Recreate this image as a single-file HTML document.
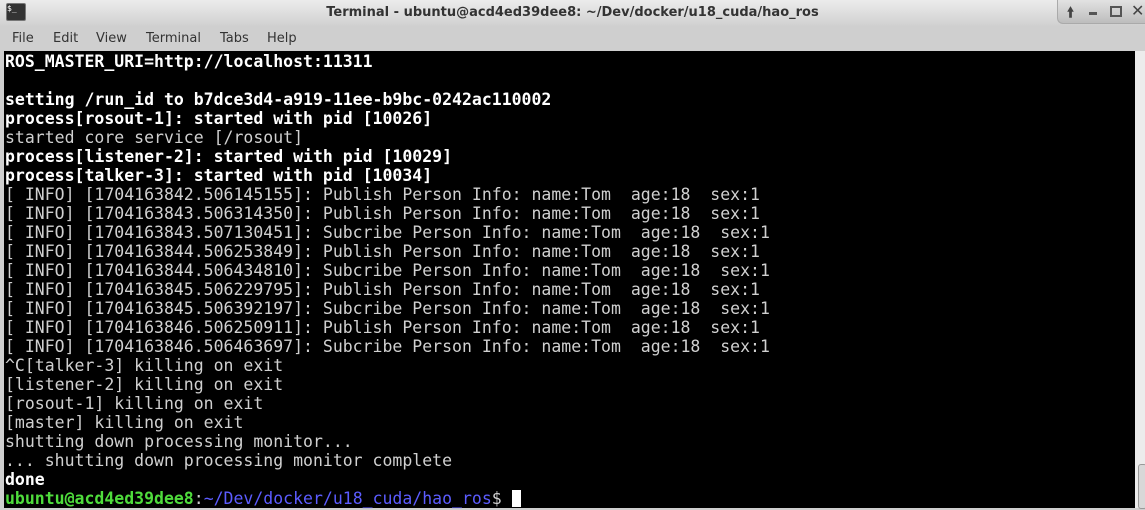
<!DOCTYPE html>
<html><head><style>
body{margin:0;width:1145px;height:510px;overflow:hidden;background:#cfcfcf;font-family:"DejaVu Sans","Liberation Sans",sans-serif;position:relative}
#title{position:absolute;left:0;top:0;width:1145px;height:26px;background:linear-gradient(#ececec,#d0d0d0)}
#title .t{position:absolute;left:0;width:1145px;top:5px;text-align:center;font-size:13px;font-weight:bold;color:#333}
#icon{position:absolute;left:6px;top:3px;width:18px;height:16px;background:#333;border:1px solid #777;border-radius:2px;color:#fff;font-size:8px;line-height:10px;font-family:"DejaVu Sans Mono",monospace}
#btns{position:absolute;left:1057px;top:0;width:88px;height:23px;background:linear-gradient(#e2e2e2,#bdbdbd);border:1px solid #aaa;border-top:none;border-right:none;border-radius:0 0 0 6px;font-size:14px;color:#444}
#menu{position:absolute;left:0;top:26px;width:1145px;height:25px;background:#cfcfcf;font-size:13px;color:#333}
#menu span{position:absolute;top:5px}
#term{position:absolute;left:4px;top:51px;width:1131px;height:457px;background:#000}
#sb{position:absolute;left:1135px;top:51px;width:10px;height:457px;background:#ececec}
#thumb{position:absolute;left:1138px;top:464px;width:7px;height:43px;background:#d8d8d8;border:1px solid #999;border-radius:3px}
pre{margin:0;position:absolute;left:5px;top:52px;font-family:"DejaVu Sans Mono","Liberation Mono",monospace;font-size:16.5px;line-height:19px;color:#d0d0d0}
b{color:#fff}
.g{color:#4fdc3c;font-weight:bold}.bl{color:#5c5cff}
.cur{display:inline-block;width:9px;height:17px;background:#fff;vertical-align:-3px}
</style></head><body>
<div id="title"><div id="icon">$_</div><div class="t">Terminal - ubuntu@acd4ed39dee8: ~/Dev/docker/u18_cuda/hao_ros</div>
<div id="btns"><span style="position:absolute;left:9px;top:2px;font-weight:bold">&#129049;</span><span style="position:absolute;left:31px;top:12px;width:8px;height:3px;background:#555"></span><span style="position:absolute;left:52px;top:6px;width:8px;height:7px;border:2px solid #555"></span><span style="position:absolute;left:73px;top:1px;font-weight:bold;font-size:16px">✕</span></div></div>
<div id="menu"><span style="left:12px">File</span><span style="left:53px">Edit</span><span style="left:96px">View</span><span style="left:146px">Terminal</span><span style="left:220px">Tabs</span><span style="left:267px">Help</span></div>
<div id="term"></div><div id="sb"></div><div id="thumb"></div>
<pre><b>ROS_MASTER_URI=http://localhost:11311</b>

<b>setting /run_id to b7dce3d4-a919-11ee-b9bc-0242ac110002</b>
<b>process[rosout-1]: started with pid [10026]</b>
started core service [/rosout]
<b>process[listener-2]: started with pid [10029]</b>
<b>process[talker-3]: started with pid [10034]</b>
[ INFO] [1704163842.506145155]: Publish Person Info: name:Tom  age:18  sex:1
[ INFO] [1704163843.506314350]: Publish Person Info: name:Tom  age:18  sex:1
[ INFO] [1704163843.507130451]: Subcribe Person Info: name:Tom  age:18  sex:1
[ INFO] [1704163844.506253849]: Publish Person Info: name:Tom  age:18  sex:1
[ INFO] [1704163844.506434810]: Subcribe Person Info: name:Tom  age:18  sex:1
[ INFO] [1704163845.506229795]: Publish Person Info: name:Tom  age:18  sex:1
[ INFO] [1704163845.506392197]: Subcribe Person Info: name:Tom  age:18  sex:1
[ INFO] [1704163846.506250911]: Publish Person Info: name:Tom  age:18  sex:1
[ INFO] [1704163846.506463697]: Subcribe Person Info: name:Tom  age:18  sex:1
^C[talker-3] killing on exit
[listener-2] killing on exit
[rosout-1] killing on exit
[master] killing on exit
shutting down processing monitor...
... shutting down processing monitor complete
<b>done</b>
<span class="g">ubuntu@acd4ed39dee8</span>:<span class="bl">~/Dev/docker/u18_cuda/hao_ros</span>$ <span class="cur"></span></pre>
</body></html>
